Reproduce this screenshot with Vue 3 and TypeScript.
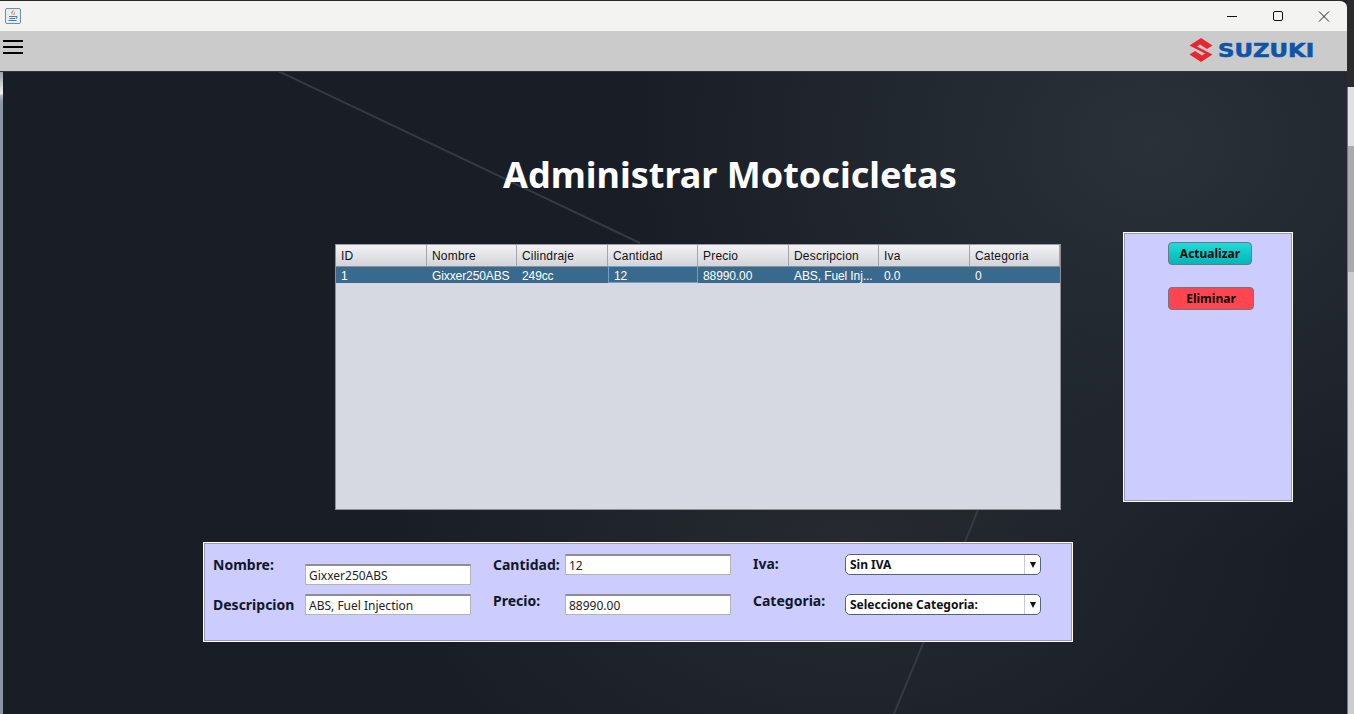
<script setup lang="ts">
interface Row {
  id: string;
  nombre: string;
  cilindraje: string;
  cantidad: string;
  precio: string;
  descripcion: string;
  iva: string;
  categoria: string;
}

const columns: { label: string; key: keyof Row }[] = [
  { label: 'ID', key: 'id' },
  { label: 'Nombre', key: 'nombre' },
  { label: 'Cilindraje', key: 'cilindraje' },
  { label: 'Cantidad', key: 'cantidad' },
  { label: 'Precio', key: 'precio' },
  { label: 'Descripcion', key: 'descripcion' },
  { label: 'Iva', key: 'iva' },
  { label: 'Categoria', key: 'categoria' },
];

const row: Row = {
  id: '1',
  nombre: 'Gixxer250ABS',
  cilindraje: '249cc',
  cantidad: '12',
  precio: '88990.00',
  descripcion: 'ABS, Fuel Inj...',
  iva: '0.0',
  categoria: '0',
};
</script>

<template>
  <div class="screen">
    <div class="window">
      <header class="titlebar">
        <svg class="app-icon" viewBox="0 0 16 16" width="16" height="16">
          <rect x="0.5" y="0.5" width="15" height="15" rx="1.5" fill="#e6eef5" stroke="#6f8fa8" />
          <path d="M8.5 1.500c1 1.800-1.800 2.500-1 4.500.3.600 1 .9 1 .9-1.500-.3-2.600-1.200-2.100-2.600.4-1 2-1.600 2.100-2.800z" fill="#e8762c" />
          <path d="M9.500 4.500c.4 1-1 1.500-.5 2.500" stroke="#e8762c" stroke-width="1" fill="none" />
          <path d="M4 8.500h6.500M4.500 10.500h5.500M3.500 12.500h8" stroke="#4f7ca3" stroke-width="1" fill="none" />
          <path d="M10.500 8.500h1.500v1.500h-1.500" stroke="#4f7ca3" stroke-width="1" fill="none" />
        </svg>
        <div class="win-controls">
          <svg viewBox="0 0 46 31" width="46" height="31"><path d="M18 15.500h10" stroke="#111" stroke-width="1" /></svg>
          <svg viewBox="0 0 46 31" width="46" height="31"><rect x="18.500" y="10.500" width="9" height="9" rx="1.500" fill="none" stroke="#111" /></svg>
          <svg viewBox="0 0 46 31" width="46" height="31"><path d="M18 10.500l10 10M28 10.500l-10 10" stroke="#222" stroke-width="1" /></svg>
        </div>
      </header>

      <nav class="menubar">
        <div class="burger"><i /><i /><i /></div>
        <div class="logo">
          <svg viewBox="0 0 24 24" width="24" height="24">
            <path d="M12 0 23.500 7.500 18 11 11 6.500 8 8.500 23.500 16.500 12 24 0.500 16.500 6 13 13 17.500 16 15.500 0.500 7.500z" fill="#e8262f" />
          </svg>
          <span class="logo-text">SUZUKI</span>
        </div>
      </nav>

      <main class="content">
        <div class="edge" />
        <svg class="backdrop" viewBox="0 0 1347 643" width="1347" height="643" aria-hidden="true">
          <path d="M278 -1 640 171" stroke="#353941" stroke-width="2" fill="none" />
          <path d="M978 438 894 642" stroke="#353941" stroke-width="2" fill="none" />
        </svg>

        <h1 class="title">Administrar Motocicletas</h1>

        <div class="middle">
          <section class="table">
            <div class="thead">
              <div v-for="c in columns" :key="c.key" class="th">{{ c.label }}</div>
            </div>
            <div class="tr">
              <div
                v-for="c in columns"
                :key="c.key"
                class="td"
                :class="{ 'td--focus': c.key === 'cantidad' }"
              >
                {{ row[c.key] }}
              </div>
            </div>
          </section>

          <aside class="actions">
            <button type="button" class="btn btn--update">Actualizar</button>
            <button type="button" class="btn btn--delete">Eliminar</button>
          </aside>
        </div>

        <section class="form">
          <div class="field-col col-a">
            <label class="l-low">Nombre:</label>
            <input class="input input--low" value="Gixxer250ABS" readonly />
            <label class="l-low">Descripcion</label>
            <input class="input" value="ABS, Fuel Injection" readonly />
          </div>
          <div class="field-col col-b">
            <label class="l-low">Cantidad:</label>
            <input class="input" value="12" readonly />
            <label class="l-high">Precio:</label>
            <input class="input" value="88990.00" readonly />
          </div>
          <div class="field-col col-c">
            <label>Iva:</label>
            <div class="combo"><span>Sin IVA</span><b><em /></b></div>
            <label class="l-high">Categoria:</label>
            <div class="combo"><span>Seleccione Categoria:</span><b><em /></b></div>
          </div>
        </section>
      </main>
    </div>

    <div class="rail">
      <div class="rail-top" />
      <div class="rail-light" />
      <div class="rail-thumb" />
      <div class="rail-track" />
    </div>
  </div>
</template>

<style>
html,
body {
  margin: 0;
  overflow: hidden;
  background: #1c2129;
}
</style>

<style scoped>
.screen {
  display: flex;
  width: 1354px;
  height: 714px;
  overflow: hidden;
  font-family: "Liberation Sans", Arial, sans-serif;
}

.window {
  width: 1347px;
  height: 714px;
  flex: none;
  display: flex;
  flex-direction: column;
  border-top: 1px solid #2a2a2a;
  box-sizing: border-box;
  border-top-right-radius: 7px;
  overflow: hidden;
}

.titlebar {
  height: 30px;
  flex: none;
  display: flex;
  align-items: center;
  justify-content: space-between;
  padding-left: 5px;
  background: #f3f3f1;
}

.app-icon {
  display: block;
  margin-bottom: 1px;
}

.win-controls {
  display: flex;
}

.win-controls svg {
  display: block;
}

.menubar {
  height: 41px;
  flex: none;
  box-sizing: border-box;
  display: flex;
  align-items: flex-start;
  justify-content: space-between;
  padding: 8px 34px 0 3px;
  background: #cbcbcb;
  border-bottom: 1px solid #33363b;
}

.burger {
  display: flex;
  flex-direction: column;
  gap: 4px;
  width: 20px;
  padding-top: 1px;
}

.burger i {
  display: block;
  height: 2px;
  background: #000;
}

.logo {
  display: flex;
  align-items: center;
  gap: 5px;
  margin-top: -1px;
}

.logo-text {
  display: inline-block;
  width: 95px;
  font-family: "DejaVu Sans", sans-serif;
  font-weight: 700;
  font-size: 19px;
  line-height: 22px;
  color: #1055a5;
  white-space: nowrap;
  transform: scaleX(1.2);
  transform-origin: left center;
  -webkit-text-stroke: 0.6px #1055a5;
}

.content {
  position: relative;
  flex: 1;
  min-height: 0;
  background:
    radial-gradient(ellipse 520px 420px at 1150px 70px, #2a3139 0%, rgba(42, 49, 57, 0) 100%),
    radial-gradient(ellipse 460px 300px at 850px 470px, #262a30 0%, rgba(38, 42, 48, 0) 100%),
    #191d26;
  padding-left: 3px;
  box-sizing: border-box;
}

.edge {
  position: absolute;
  left: 0;
  top: 0;
  bottom: 0;
  width: 3px;
  background: linear-gradient(#9aa0a8, #f2f2f2 22px, #b8bcc6 23px, #8d95a3 30px);
}

.backdrop {
  position: absolute;
  left: 0;
  top: 0;
}

.title {
  position: relative;
  margin: 0;
  padding: 81px 0 0 500px;
  font-family: "Noto Sans", sans-serif;
  font-size: 36px;
  line-height: 44px;
  font-weight: 700;
  color: #fff;
  white-space: nowrap;
}

.middle {
  position: relative;
  display: flex;
  align-items: flex-start;
  margin: 47px 0 0 332px;
}

.table {
  width: 726px;
  height: 266px;
  flex: none;
  box-sizing: border-box;
  background: #d6d9e1;
  border: 1px solid #8d9096;
  border-top-color: #9a9da3;
}

.thead,
.tr {
  display: grid;
  grid-template-columns: 91px 90px 91px 90px 91px 90px 91px 90px;
}

.thead {
  height: 21px;
}

.th {
  box-sizing: border-box;
  padding: 1px 0 0 5px;
  font-size: 12px;
  letter-spacing: 0.2px;
  line-height: 20px;
  color: #111;
  background: linear-gradient(#f3f3f5, #d3d4da);
  border-right: 1px solid #a3a5ab;
  border-bottom: 1px solid #8e9096;
}

.tr {
  height: 17px;
  background: #39698c;
}

.td {
  box-sizing: border-box;
  padding: 2px 0 0 5px;
  font-size: 12px;
  letter-spacing: -0.1px;
  line-height: 16px;
  color: #fff;
  white-space: nowrap;
  overflow: hidden;
}

.td--focus {
  border: 1px solid #6f9fcb;
  padding: 1px 0 0 5px;
  line-height: 16px;
}

.actions {
  box-sizing: border-box;
  width: 170px;
  height: 270px;
  flex: none;
  margin: -12px 0 0 62px;
  padding: 9px 0 0 44px;
  display: flex;
  flex-direction: column;
  align-items: flex-start;
  gap: 22px;
  background: #ccccff;
  border: 1px solid #fff;
  box-shadow: inset 1px 1px 0 #9a9ab8, inset -1px -1px 0 #9a9ab8;
}

.btn {
  box-sizing: border-box;
  height: 23px;
  padding: 0;
  border: 1px solid #6f7780;
  border-radius: 4px;
  font-family: "Noto Sans", sans-serif;
  font-size: 12px;
  font-weight: 700;
  line-height: 20px;
  color: #0a0a0a;
}

.btn--update {
  width: 84px;
  background: linear-gradient(#1fdcd8, #0fc4c4 60%, #09b4b8);
}

.btn--delete {
  width: 86px;
  background: #ff4650;
}

.form {
  position: relative;
  box-sizing: border-box;
  display: flex;
  width: 870px;
  height: 100px;
  margin: 32px 0 0 200px;
  padding: 11px 0 0 9px;
  background: #ccccff;
  border: 1px solid #fff;
  box-shadow: inset -1px -1px 0 #9a9ab8, inset 1px 1px 0 #9a9ab8;
}

.field-col {
  display: grid;
  grid-template-rows: 21px 21px;
  row-gap: 19px;
  flex: none;
}

.col-a {
  grid-template-columns: 92px 166px;
  width: 280px;
}

.col-b {
  grid-template-columns: 72px 166px;
  width: 260px;
}

.col-c {
  grid-template-columns: 92px 196px;
}

label {
  font-family: "Noto Sans", sans-serif;
  font-weight: 700;
  font-size: 14px;
  line-height: 20px;
  color: #101828;
  white-space: nowrap;
}

.l-low {
  margin-top: 1px;
}

.l-high {
  margin-top: -3px;
}

.input {
  box-sizing: border-box;
  width: 166px;
  height: 21px;
  padding: 0 3px;
  border: 1px solid #b4b4b4;
  border-top: 2px solid #8f8f8f;
  background: #fff;
  outline: none;
  font-family: "Noto Sans", sans-serif;
  font-size: 12px;
  color: #222;
}

.input--low {
  margin-top: 10px;
}

.combo {
  box-sizing: border-box;
  display: flex;
  align-items: center;
  justify-content: space-between;
  height: 21px;
  padding-left: 4px;
  border: 1px solid #51657a;
  border-radius: 5px;
  background: #fff;
  font-family: "Noto Sans", sans-serif;
  font-size: 12px;
  font-weight: 700;
  color: #111;
}

.combo b {
  display: flex;
  align-items: center;
  justify-content: center;
  width: 15px;
  height: 100%;
  border-left: 1px solid #c8ccd2;
}

.combo em {
  width: 0;
  height: 0;
  border-left: 3.500px solid transparent;
  border-right: 3.500px solid transparent;
  border-top: 6px solid #111;
}

.rail {
  flex: 1;
  height: 714px;
  display: flex;
  flex-direction: column;
  background: #1c2129;
}

.rail-top {
  height: 87px;
  background: #2b2b2b;
}

.rail-light,
.rail-thumb,
.rail-track {
  box-sizing: border-box;
  border-left: 1px solid #4f7f9f;
}

.rail-light {
  height: 59px;
  background: #e0e0e0;
}

.rail-thumb {
  height: 126px;
  background: #aaaaaa;
}

.rail-track {
  flex: 1;
  background: #cccccc;
}
</style>
